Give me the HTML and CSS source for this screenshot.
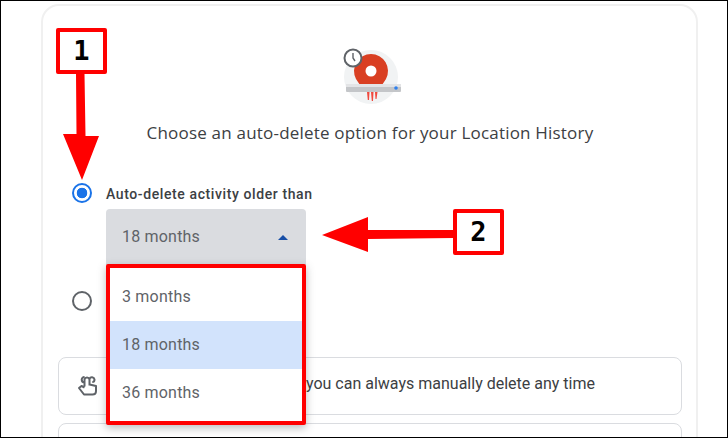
FILE: index.html
```html
<!DOCTYPE html>
<html lang="en">
<head>
    <meta charset="UTF-8">
    <meta name="viewport" content="width=device-width, initial-scale=1.0">
    <title>Auto-delete option</title>
    <link rel="stylesheet" href="styles.css">
</head>
<body>
    <div class="frame">
        <div class="card">
            <svg class="hero" width="56" height="56" viewBox="0 0 56 56">
                <circle cx="28" cy="28" r="27" fill="#f1f3f4"/>
                <path d="M28 5a17 17 0 0 1 15 25l-4 6H17l-4-6A17 17 0 0 1 28 5z" fill="#d93f22"/>
                <circle cx="28" cy="22" r="5.5" fill="#fff"/>
                <path d="M24 43h2.500l-.5 8h-1.200zM28 43h2.500l-.5 9h-1.200zM32 43h2.500l-1 7h-1z" fill="#f0493e"/>
                <rect x="3" y="35" width="55" height="8" rx="1" fill="#c4c6c9"/>
                <rect x="3" y="35" width="55" height="3" fill="#e3e4e6"/>
                <circle cx="53" cy="39" r="1.800" fill="#2f80ed"/>
                <circle cx="10" cy="9" r="8.500" fill="#fff" stroke="#5f6368" stroke-width="2"/>
                <path d="M10 4v5l2 3" fill="none" stroke="#5f6368" stroke-width="1.400"/>
            </svg>
            <h1>Choose an auto-delete option for your Location History</h1>

            <div class="option option-on">
                <span class="radio radio-on"></span>
                <span class="option-label">Auto-delete activity older than</span>
            </div>
            <div class="select">
                <span>18 months</span>
                <span class="caret"></span>
            </div>
            <div class="option option-off">
                <span class="radio"></span>
            </div>

            <div class="info">
                <svg class="hand" width="24" height="24" viewBox="0 0 24 24">
                    <path d="M8.5 12.5V5.5a2.6 2.6 0 0 1 5 0v6M13.5 9.5V5a2.6 2.6 0 0 1 5 0.5c0 2-1.500 2.500-2.200 2.500M8.500 8.500C6.500 8.500 5.700 7 5.700 5.500a2.600 2.600 0 0 1 2.800-2.500M8.500 13.500L5.500 12 3 14l5 6.500h8.500c2 0 3.500-1.500 3.500-3.500v-5l-6.500-1.500" fill="none" stroke="#5f6368" stroke-width="2" stroke-linejoin="round"/>
                </svg>
                <span class="info-text">you can always manually delete any time</span>
            </div>
            <div class="info"></div>
        </div>

        <ul class="menu">
            <li>3 months</li>
            <li class="picked">18 months</li>
            <li>36 months</li>
        </ul>

        <svg class="arrows" width="728" height="438" viewBox="0 0 728 438">
            <path d="M76 74h8.500l1 62H99L82 180 63 134h13.500z" fill="#f00"/>
            <path d="M453 230v8l-85 1v13l-46-17 46-18v13z" fill="#f00"/>
        </svg>
        <div class="badge badge-one">1</div>
        <div class="badge badge-two">2</div>
    </div>
</body>
</html>
```

FILE: styles.css
```css
html, body {
    margin: 0;
    padding: 0;
    height: 100%;
    overflow: hidden;
}

body {
    background-color: #fff;
    color: #3c4043;
    font-family: Roboto, "Noto Sans", sans-serif;
}

.frame {
    position: relative;
    box-sizing: border-box;
    width: 728px;
    height: 438px;
    border: 1px solid #000;
    overflow: hidden;
}

.card {
    box-sizing: border-box;
    width: 657px;
    height: 500px;
    margin: 3px 0 0 40px;
    padding: 43px 14px 0 15px;
    border: 2px solid #f0f0f0;
    border-radius: 18px;
    display: flex;
    flex-direction: column;
}

.hero {
    align-self: center;
    display: block;
    margin-left: 2px;
    overflow: visible;
}

h1 {
    margin: 16px 0 0;
    text-align: center;
    font-family: "Open Sans", sans-serif;
    font-size: 17px;
    font-weight: 400;
    letter-spacing: 0.2px;
    line-height: 24px;
    color: #3c4043;
}

.option {
    display: flex;
    align-items: center;
    gap: 14px;
    margin-left: 14px;
}

.option-on {
    margin-top: 36px;
    height: 24px;
}

.option-off {
    margin-top: 24px;
    height: 24px;
}

.radio {
    box-sizing: border-box;
    width: 20px;
    height: 20px;
    border: 2px solid #5f6368;
    border-radius: 50%;
    flex: none;
}

.radio-on {
    border-color: #1a73e8;
    background: radial-gradient(circle, #1a73e8 0 5px, #fff 5.6px);
}

.option-label {
    margin-top: 2px;
    font-size: 14px;
    font-weight: 500;
    letter-spacing: 0.6px;
    color: #3c4043;
}

.select {
    box-sizing: border-box;
    width: 200px;
    height: 56px;
    margin: 4px 0 0 48px;
    padding: 0 18px 0 16px;
    background-color: #dadce0;
    border-radius: 4px 4px 0 0;
    display: flex;
    align-items: center;
    justify-content: space-between;
    font-size: 16px;
    letter-spacing: 0.2px;
    color: #5f6368;
}

.select span:first-child {
    margin-bottom: 2px;
}

.caret {
    width: 0;
    height: 0;
    border-left: 5px solid transparent;
    border-right: 5px solid transparent;
    border-bottom: 5px solid #174ea6;
}

.info {
    box-sizing: border-box;
    flex: none;
    height: 58px;
    margin-top: 8px;
    border: 1px solid #dadce0;
    border-radius: 8px;
    display: flex;
    align-items: center;
    padding-left: 17px;
}

.option-off + .info {
    margin-top: 44px;
}

.info-text {
    margin: 0 0 6px 206px;
    font-size: 16px;
    color: #3c4043;
}

.hand {
    flex: none;
}

.menu {
    position: absolute;
    left: 105px;
    top: 263px;
    box-sizing: border-box;
    width: 200px;
    height: 161px;
    margin: 0;
    padding: 5px 0;
    list-style: none;
    background-color: #fff;
    border: 4px solid #f00;
    border-radius: 2px;
    box-shadow: 0 3px 8px rgba(60, 64, 67, 0.35);
    font-size: 16px;
    letter-spacing: 0.2px;
    color: #5f6368;
}

.menu li {
    height: 48px;
    line-height: 48px;
    padding-left: 12px;
}

.menu .picked {
    background-color: #d2e3fc;
}

.arrows {
    position: absolute;
    left: -1px;
    top: -1px;
}

.badge {
    position: absolute;
    box-sizing: border-box;
    width: 51px;
    height: 46px;
    background-color: #fff;
    border: 4px solid #f00;
    border-radius: 2px;
    text-align: center;
    font-family: "DejaVu Sans Mono", monospace;
    font-size: 27px;
    font-weight: 700;
    line-height: 38px;
    color: #000;
}

.badge-one {
    left: 55px;
    top: 27px;
}

.badge-two {
    left: 452px;
    top: 208px;
}
```
